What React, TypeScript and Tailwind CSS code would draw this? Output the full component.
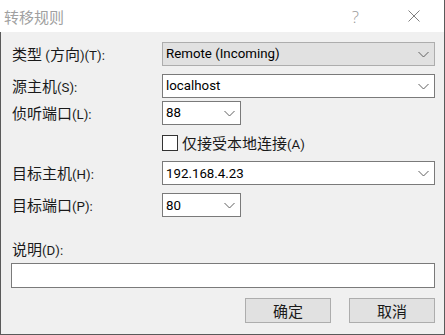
import React from 'react';

const latin = { fontFamily: 'Roboto, "Liberation Sans", Arial, sans-serif' };
const cjk = { fontFamily: '"Noto Sans CJK SC", "Noto Sans", sans-serif' };

// split a label into CJK / latin runs so each gets its own size
function T({ text, className = '' }: { text: string; className?: string }) {
  const runs = text.match(/[\u3000-\u9fff]+|[^\u3000-\u9fff]+/g) ?? [];
  return (
    <span className={`inline-flex items-baseline leading-none ${className}`}>
      {runs.map((r, i) =>
        /[\u3000-\u9fff]/.test(r) ? (
          <span key={i} className="text-[15px] leading-none" style={cjk}>
            {r}
          </span>
        ) : (
          <span key={i} className="text-[13.3px] leading-none whitespace-pre" style={latin}>
            {r}
          </span>
        )
      )}
    </span>
  );
}

function Chevron() {
  return (
    <svg width="11" height="7" viewBox="0 0 11 7" className="shrink-0">
      <path d="M0.5 1 L5.5 6 L10.5 1" fill="none" stroke="#606060" strokeWidth="1" />
    </svg>
  );
}

function Combo({ value, width, grey }: { value: string; width: string; grey?: boolean }) {
  return (
    <div
      className={`${width} h-[24px] flex items-center justify-between pl-[3px] pr-[5px] border ${
        grey ? 'bg-[#e1e1e1] border-[#adadad]' : 'bg-white border-[#7a7a7a]'
      }`}
    >
      <T text={value} className="text-black" />
      <Chevron />
    </div>
  );
}

function Row({ label, children, mt }: { label: string; children: React.ReactNode; mt: string }) {
  return (
    <div className={`flex items-center ${mt}`}>
      <div className="w-[161px] pl-[11px] flex items-center">
        <T text={label} className="text-[#1a1a1a]" />
      </div>
      {children}
    </div>
  );
}

export default function App() {
  return (
    <div className="w-[445px] h-[335px] bg-white flex flex-col select-none border-r border-[#5a5a5a]">
      {/* title bar */}
      <div className="h-[32px] flex items-center shrink-0">
        <span className="pl-[4px] text-[15px] text-[#a0a0a0] leading-none" style={cjk}>
          转移规则
        </span>
        <span className="ml-auto text-[17px] text-[#9a9a9a] leading-none" style={{ fontFamily: '"Open Sans", sans-serif', fontWeight: 300 }}>
          ?
        </span>
        <svg width="12" height="12" viewBox="0 0 12 12" className="ml-[49px] mr-[24px]">
          <path d="M0.5 0.5 L11.5 11.5 M11.5 0.5 L0.5 11.5" stroke="#808080" strokeWidth="1" />
        </svg>
      </div>

      {/* body */}
      <div className="flex-1 bg-[#f0f0f0] border-l border-b border-[#5a5a5a] flex flex-col pr-[9px]">
        <Row label="类型 (方向)(T):" mt="mt-[10px]">
          <Combo value="Remote (Incoming)" width="flex-1" grey />
        </Row>
        <Row label="源主机(S):" mt="mt-[8px]">
          <Combo value="localhost" width="flex-1" />
        </Row>
        <Row label="侦听端口(L):" mt="mt-[3px]">
          <Combo value="88" width="w-[79px]" />
        </Row>
        <div className="flex items-center mt-[10px] pl-[161px]">
          <div className="w-[16px] h-[16px] bg-white border border-[#333333]" />
          <T text="仅接受本地连接(A)" className="ml-[4px] text-[#1a1a1a]" />
        </div>
        <Row label="目标主机(H):" mt="mt-[10px]">
          <Combo value="192.168.4.23" width="flex-1" />
        </Row>
        <Row label="目标端口(P):" mt="mt-[8px]">
          <Combo value="80" width="w-[79px]" />
        </Row>

        <div className="mt-[24px] pl-[11px] flex items-center">
          <T text="说明(D):" className="text-[#1a1a1a]" />
        </div>
        <div className="mt-[5px] ml-[10px] h-[25px] bg-white border border-[#7a7a7a]" />

        <div className="mt-[10px] flex justify-end gap-[18px]">
          <button className="w-[86px] h-[25px] bg-[#e1e1e1] border border-[#adadad] flex items-center justify-center">
            <T text="确定" className="text-[#1a1a1a]" />
          </button>
          <button className="w-[86px] h-[25px] bg-[#e1e1e1] border border-[#adadad] flex items-center justify-center">
            <T text="取消" className="text-[#1a1a1a]" />
          </button>
        </div>
      </div>
    </div>
  );
}
